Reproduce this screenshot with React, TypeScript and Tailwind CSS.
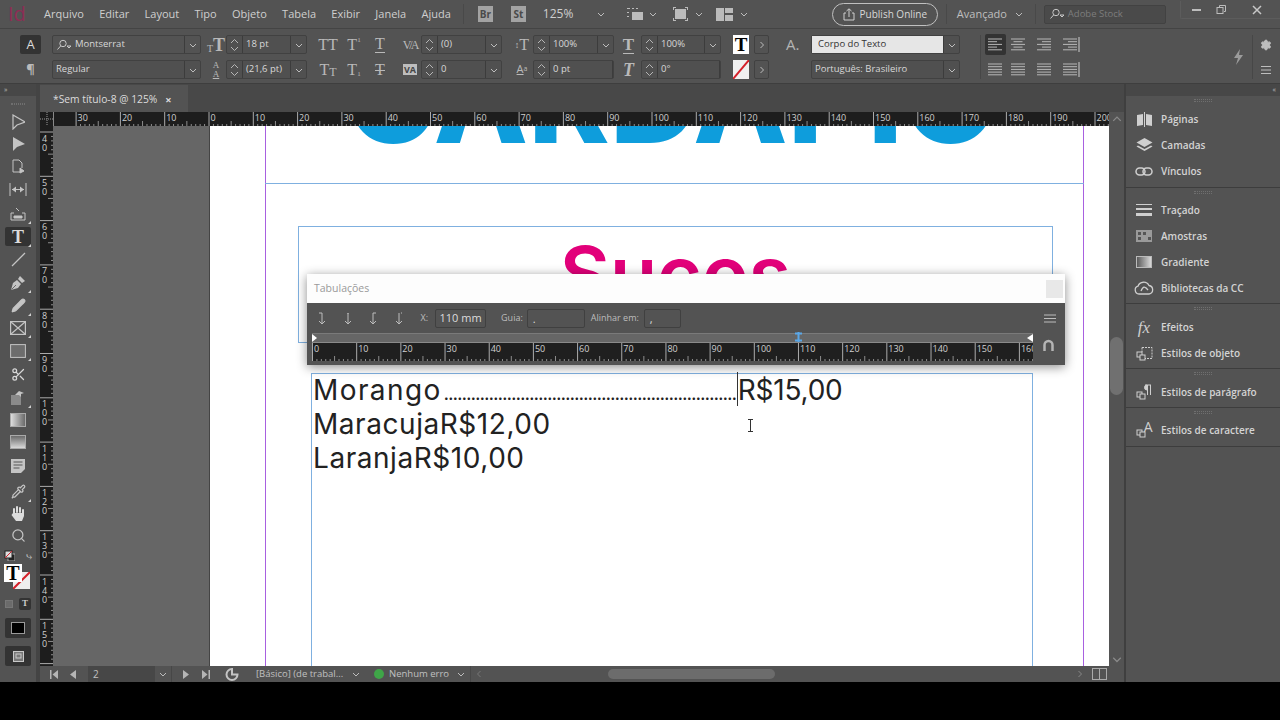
import React from "react";
import { Scissors, Search, Pipette, Pencil, Settings } from "lucide-react";

const C = "#c4c4c4";

function Chevron({ dir = "down", size = 8, color = "#bdbdbd" }: { dir?: "down" | "up" | "left" | "right"; size?: number; color?: string }) {
  const d = { down: "M1 3l3 3 3-3", up: "M1 5.5l3-3 3 3", left: "M5.5 1l-3 3 3 3", right: "M2.5 1l3 3-3 3" }[dir];
  return (
    <svg width={size} height={size} viewBox="0 0 8 8" fill="none" stroke={color} strokeWidth="1">
      <path d={d} />
    </svg>
  );
}

function Stepper() {
  return (
    <div className="w-[16px] h-full flex flex-col items-center justify-center border-r border-[#3c3c3c] shrink-0">
      <svg width="9" height="14" viewBox="0 0 9 14" fill="none" stroke="#b5b5b5" strokeWidth="1">
        <path d="M1 5l3.5-3.5L8 5M1 9l3.5 3.5L8 9" />
      </svg>
    </div>
  );
}

function Field({ w, value, stepper = true, caretW = 16, light = false }: { w: number; value: string; stepper?: boolean; caretW?: number; light?: boolean }) {
  return (
    <div style={{ width: w }} className="h-[19px] flex items-center border border-[#414141] rounded-[2px] bg-[#505050] text-[9.5px] text-[#d8d8d8] shrink-0">
      {stepper && <Stepper />}
      <div className={`flex-1 h-full flex items-center whitespace-nowrap overflow-hidden ${light ? "bg-[#e6e6e6] text-[#333] pl-[6px]" : "pl-[3px]"}`}>{value}</div>
      <div style={{ width: caretW }} className="h-full flex items-center justify-center border-l border-[#3c3c3c] shrink-0">
        <Chevron />
      </div>
    </div>
  );
}

function SerifT({ t, cls = "text-[16px]" }: { t: string; cls?: string }) {
  return <span className={`font-['Liberation_Serif',serif] text-[#b9b9b9] leading-none whitespace-nowrap ${cls}`}>{t}</span>;
}

function AlignIcon({ kind, last = false }: { kind: "l" | "c" | "r" | "j"; last?: boolean }) {
  const rows = [0, 1, 2, 3, 4];
  return (
    <svg width="18" height="15" viewBox="0 0 18 15" stroke="#b8b8b8" strokeWidth="1">
      {rows.map((r) => {
        const long = r % 2 === 0;
        const len = kind === "j" ? 14 : long ? 14 : 9;
        const x = kind === "l" || kind === "j" ? 1 : kind === "r" ? 15 - len : 8 - len / 2;
        return <line key={r} x1={x} x2={x + len} y1={2 + r * 2.7} y2={2 + r * 2.7} />;
      })}
      {last && <line x1="17" x2="17" y1="0" y2="15" stroke="#d0d0d0" />}
    </svg>
  );
}

function ControlBar() {
  return (
    <div className="h-[56px] bg-[#535353] border-t border-b border-t-[#444] border-b-[#3e3e3e] flex items-center pt-[2px] shrink-0">
      <div className="ml-[20px] w-[21px] flex flex-col gap-[6px] items-center">
        <div className="w-[21px] h-[19px] bg-[#333] rounded-[2px] flex items-center justify-center text-[#ddd] text-[13px]">A</div>
        <div className="h-[19px] flex items-center text-[#bbb] text-[13px] font-bold">¶</div>
      </div>
      <div className="ml-[11px] flex flex-col gap-[6px]">
        <div className="w-[149px] h-[19px] flex items-center border border-[#414141] rounded-[2px] text-[9.5px] text-[#d8d8d8]">
          <svg className="ml-[3px]" width="16" height="12" viewBox="0 0 16 12" fill="none" stroke="#c8c8c8"><circle cx="7" cy="4.5" r="3.2" /><path d="M4.6 7L1.5 10.5M11 7h4l-2 2z" /></svg>
          <span className="ml-[3px] flex-1">Montserrat</span>
          <div className="w-[16px] h-full flex items-center justify-center border-l border-[#3c3c3c]"><Chevron /></div>
        </div>
        <Field w={149} value="Regular" stepper={false} />
      </div>
      <div className="ml-[5px] w-[20px] flex flex-col gap-[6px] items-center">
        <div className="h-[19px] flex items-end"><SerifT t="T" cls="text-[10px]" /><SerifT t="T" cls="text-[18px] font-bold" /></div>
        <div className="h-[19px] flex flex-col items-center justify-center text-[9px] leading-[9px] text-[#b9b9b9] font-['Liberation_Serif',serif]"><span>A</span><span className="underline">A</span></div>
      </div>
      <div className="flex flex-col gap-[6px]">
        <Field w={81} value="18 pt" />
        <Field w={81} value="(21,6 pt)" />
      </div>
      <div className="ml-[8px] w-[78px] flex flex-col gap-[6px]">
        <div className="h-[19px] grid grid-cols-3 items-center justify-items-center">
          <SerifT t="TT" />
          <span className="flex items-start"><SerifT t="T" /><SerifT t="1" cls="text-[7px]" /></span>
          <span className="flex border-b border-[#b9b9b9]"><SerifT t="T" /></span>
        </div>
        <div className="h-[19px] grid grid-cols-3 items-center justify-items-center">
          <span className="flex items-end"><SerifT t="T" /><SerifT t="T" cls="text-[12px]" /></span>
          <span className="flex items-end"><SerifT t="T" /><SerifT t="1" cls="text-[7px]" /></span>
          <span className="flex line-through decoration-[#b9b9b9]"><SerifT t="T" cls="text-[16px] line-through" /></span>
        </div>
      </div>
      <div className="ml-[6px] w-[22px] flex flex-col gap-[6px] items-center">
        <div className="h-[19px] flex items-center"><span className="text-[12px] font-['Liberation_Serif',serif] text-[#bbb] tracking-[-2px]">V/A</span></div>
        <div className="h-[19px] flex items-center"><span className="text-[9px] font-bold bg-[#bdbdbd] text-[#444] px-[1px] leading-[11px]">VA</span></div>
      </div>
      <div className="flex flex-col gap-[6px]">
        <Field w={81} value="(0)" />
        <Field w={81} value="0" />
      </div>
      <div className="ml-[9px] w-[22px] flex flex-col gap-[6px] items-center">
        <div className="h-[19px] flex items-center"><span className="text-[9px] text-[#bbb]">↕</span><SerifT t="T" cls="text-[16px]" /></div>
        <div className="h-[19px] flex items-center"><span className="text-[11px] text-[#bbb] underline">A</span><span className="text-[7px] text-[#bbb]">a</span></div>
      </div>
      <div className="flex flex-col gap-[6px]">
        <Field w={81} value="100%" />
        <Field w={81} value="0 pt" caretW={0} />
      </div>
      <div className="ml-[2px] w-[25px] flex flex-col gap-[6px] items-center">
        <div className="h-[19px] flex items-center"><span className="flex border-b border-[#b9b9b9]"><SerifT t="T" cls="text-[17px] font-bold" /></span></div>
        <div className="h-[19px] flex items-center"><SerifT t="T" cls="text-[18px] italic font-bold" /></div>
      </div>
      <div className="flex flex-col gap-[6px]">
        <Field w={80} value="100%" />
        <Field w={80} value="0°" caretW={0} />
      </div>
      <div className="ml-[12px] flex flex-col gap-[6px]">
        <div className="h-[19px] flex items-center gap-[5px]">
          <div className="w-[16px] h-[19px] bg-white flex items-center justify-center"><span className="font-['Liberation_Serif',serif] font-bold text-[19px] text-black leading-none">T</span></div>
          <div className="w-[15px] h-[19px] border border-[#414141] rounded-[2px] flex items-center justify-center"><Chevron dir="right" /></div>
        </div>
        <div className="h-[19px] flex items-center gap-[5px]">
          <svg width="16" height="19" viewBox="0 0 16 19"><rect width="16" height="19" fill="#f0f0f0" /><path d="M0 19L16 0" stroke="#d4202a" strokeWidth="2" /></svg>
          <div className="w-[15px] h-[19px] border border-[#414141] rounded-[2px] flex items-center justify-center"><Chevron dir="right" /></div>
        </div>
      </div>
      <div className="ml-[17px] w-[18px] flex flex-col gap-[6px]">
        <div className="h-[19px] flex items-center text-[#b5b5b5] text-[15px] leading-none">A.</div>
        <div className="h-[19px]" />
      </div>
      <div className="ml-[7px] flex flex-col gap-[6px]">
        <Field w={149} value="Corpo do Texto" stepper={false} light />
        <Field w={149} value="Português: Brasileiro" stepper={false} />
      </div>
      <div className="ml-[20px] h-[44px] border-l border-[#474747] pl-[4px] flex flex-col gap-[6px]">
        <div className="h-[19px] flex items-center">
          <div className="w-[21px] h-[21px] bg-[#333] rounded-[2px] flex items-center justify-center"><AlignIcon kind="l" /></div>
          <div className="w-[26px] flex justify-center"><AlignIcon kind="c" /></div>
          <div className="w-[26px] flex justify-center"><AlignIcon kind="r" /></div>
          <div className="w-[26px] flex justify-center"><AlignIcon kind="r" last /></div>
        </div>
        <div className="h-[19px] flex items-center">
          <div className="w-[21px] flex justify-center"><AlignIcon kind="j" /></div>
          <div className="w-[26px] flex justify-center"><AlignIcon kind="j" /></div>
          <div className="w-[26px] flex justify-center"><AlignIcon kind="j" /></div>
          <div className="w-[26px] flex justify-center"><AlignIcon kind="j" last /></div>
        </div>
      </div>
      <svg className="ml-[148px]" width="12" height="18" viewBox="0 0 12 18" fill="#9b9b9b"><path d="M8 1L2 10h4l-2 7 7-10H7z" /></svg>
      <div className="ml-[8px] h-[44px] border-l border-[#474747] w-[26px] flex flex-col items-center justify-between py-[4px]">
        <Settings size={12} color="#bdbdbd" fill="#bdbdbd" />
        <svg width="12" height="10" stroke="#bdbdbd"><path d="M1 1.5h10M1 5h10M1 8.5h10" /></svg>
      </div>
    </div>
  );
}

function MenuBar() {
  const items = ["Arquivo", "Editar", "Layout", "Tipo", "Objeto", "Tabela", "Exibir", "Janela", "Ajuda"];
  return (
    <div className="h-[28px] bg-[#535353] flex items-center shrink-0 text-[#cfcfcf] text-[11px]">
      <span className="ml-[8px] w-[36px] text-[#8e2d55] text-[20px] leading-none">Id</span>
      <div className="flex gap-[15.3px]">{items.map((m) => <span key={m}>{m}</span>)}</div>
      <div className="ml-[12px] h-[20px] border-l border-[#494949]" />
      <div className="ml-[14px] w-[15px] h-[16px] bg-[#a3a3a3] text-[#4a4a4a] text-[10px] font-bold flex items-center justify-center">Br</div>
      <div className="ml-[18px] w-[15px] h-[16px] bg-[#a3a3a3] text-[#4a4a4a] text-[10px] font-bold flex items-center justify-center">St</div>
      <span className="ml-[17px] w-[54px] text-[12px]">125%</span>
      <Chevron />
      <svg className="ml-[22px]" width="18" height="14" viewBox="0 0 18 14" fill="#bbb"><path d="M0 1h3v1H0zM5 1h2v1H5zM9 1h2v1H9zM0 5h2v1H0zM0 9h2v1H0zM5 5h11v8H5z" /></svg>
      <span className="ml-[4px]"><Chevron /></span>
      <svg className="ml-[16px]" width="15" height="14" viewBox="0 0 15 14" fill="#bbb"><rect x="2" y="2" width="11" height="10" /><path d="M0 0h3v1H1v2H0zM15 0h-3v1h2v2h1zM0 14h3v-1H1v-2H0zM15 14h-3v-1h2v-2h1z" /></svg>
      <span className="ml-[7px]"><Chevron /></span>
      <svg className="ml-[13px]" width="17" height="13" viewBox="0 0 17 13" fill="#bbb"><rect width="8" height="13" /><rect x="9" width="8" height="5" /><rect x="9" y="7" width="8" height="6" /></svg>
      <span className="ml-[7px]"><Chevron /></span>
      <div className="ml-[84px] w-[106px] h-[23px] rounded-full border border-[#c0c0c0] flex items-center justify-center gap-[5px] text-[#d8d8d8] text-[10px] whitespace-nowrap">
        <svg width="12" height="13" viewBox="0 0 12 13" fill="none" stroke="#d0d0d0"><path d="M3 5H1v7h10V5H9M6 9V1M3.5 3L6 .8 8.500 3" /></svg>
        Publish Online
      </div>
      <div className="ml-[8px] h-[20px] border-l border-[#494949]" />
      <span className="ml-[10px] text-[#bfbfbf] text-[11px] w-[55px]">Avançado</span>
      <span className="ml-[3px]"><Chevron /></span>
      <div className="ml-[12px] h-[20px] border-l border-[#494949]" />
      <div className="ml-[8px] w-[122px] h-[19px] bg-[#4a4a4a] border border-[#424242] rounded-[2px] flex items-center pl-[4px] gap-[3px] text-[#7d7d7d] text-[9.5px]">
        <svg width="16" height="12" viewBox="0 0 16 12" fill="none" stroke="#c8c8c8"><circle cx="7" cy="4.500" r="3.200" /><path d="M4.600 7L1.500 10.500M11 7h4l-2 2z" /></svg>
        Adobe Stock
      </div>
      <div className="ml-[14px] w-[100px] h-[18px] -mt-[8px] border-l border-b border-[#5c5c5c] rounded-bl-[2px] flex items-center text-[#bdbdbd]">
        <svg className="ml-[11px]" width="10" height="4"><rect y="1" width="9" height="2" fill="#bdbdbd" /></svg>
        <svg className="ml-[14px]" width="11" height="11" fill="none" stroke="#bdbdbd"><rect x="1" y="3.500" width="6" height="6" /><path d="M3.500 3V1.500h6v6H8" /></svg>
        <svg className="ml-[25px]" width="10" height="10" stroke="#c8c8c8" strokeWidth="1.500"><path d="M1 1l8 8M9 1L1 9" /></svg>
      </div>
    </div>
  );
}

const PenNib = (
  <svg width="16" height="16" viewBox="0 0 16 16" fill={C}>
    <path d="M1 15l2-7 4-3 4 4-3 4z" />
    <path d="M8 4l2-3 5 5-3 2z" />
    <path d="M1.500 14.500L6 10" stroke="#535353" strokeWidth="0.800" />
  </svg>
);

const HandIcon = (
  <svg width="16" height="17" viewBox="0 0 16 17" stroke="#dcdcdc" strokeLinecap="round" strokeWidth="2" fill="#dcdcdc">
    <path d="M4 8V4M7 7V2M10 7V3M13 8V5" />
    <path d="M3 8h11v3l-2 5H6L1.500 10z" stroke="none" />
  </svg>
);

const TOOLS: [number, React.ReactNode, boolean?][] = [
  [22, <svg width="14" height="16" fill="none" stroke={C} strokeWidth="1.200"><path d="M2 1v14l4-4 8-3z" /></svg>],
  [22, <svg width="14" height="16" fill={C}><path d="M2 1v14l4-4 8-3z" /></svg>],
  [22, <svg width="14" height="15" fill="none" stroke={C}><path d="M2 1h6l3 3v5M2 1v12h7" /><path d="M9 9l4 3-4 2z" fill={C} /></svg>],
  [24, <svg width="18" height="13" stroke={C} fill={C}><path d="M1 0v13M17 0v13M3 6.500h12" /><path d="M3 6.500l4-3v6zM15 6.500l-4-3v6z" stroke="none" /></svg>],
  [24, <svg width="16" height="15" fill="none" stroke={C}><path d="M1 7v7h14V7h-3M1 7h3M6 2l3 3" /><path d="M4 10h8v2H4z" fill={C} /></svg>, true],
  [23, <div className="w-[26px] h-[19px] bg-[#333] rounded-[2px] flex items-center justify-center"><span className="font-['Liberation_Serif',serif] font-bold text-[18px] text-[#dcdcdc] leading-none">T</span></div>, true],
  [23, <svg width="15" height="15" stroke={C} strokeWidth="1.300"><path d="M1 14L14 1" /></svg>],
  [23, PenNib, true],
  [23, <Pencil size={15} color={C} fill={C} />, true],
  [22, <svg width="16" height="14" fill="none" stroke={C} strokeWidth="1.200"><rect x=".6" y=".6" width="14.800" height="12.800" /><path d="M1 1l14 12M15 1L1 13" /></svg>, true],
  [23, <svg width="16" height="14"><rect x=".6" y=".6" width="14.800" height="12.800" fill="#6d6d6d" stroke={C} /></svg>, true],
  [24, <Scissors size={15} color="#d8d8d8" />],
  [23, <svg width="16" height="14" fill={C}><path d="M1 4h10v10H1z" fill="#8a8a8a" /><path d="M9 0l5 2-3 1v3l-2-2-4 0z" /></svg>, true],
  [21, <svg width="16" height="14"><defs><linearGradient id="gg"><stop offset="0" stopColor="#e0e0e0" /><stop offset="1" stopColor="#666" /></linearGradient></defs><rect x=".5" y=".5" width="15" height="13" fill="url(#gg)" stroke="#aaa" /></svg>],
  [23, <svg width="16" height="14"><defs><linearGradient id="gf" x1="0" x2="0" y1="0" y2="1"><stop offset="0" stopColor="#666" /><stop offset="1" stopColor="#ddd" /></linearGradient></defs><rect x=".5" y=".5" width="15" height="13" fill="url(#gf)" stroke="#aaa" /></svg>],
  [26, <svg width="14" height="14" fill={C}><path d="M0 0h14v10l-4 4H0z" /><path d="M2.500 3h9M2.500 6h9M2.500 9h6" stroke="#555" /></svg>],
  [24, <Pipette size={15} color={C} />, true],
  [21, HandIcon],
  [23, <Search size={15} color={C} />],
];

function Tri() {
  return (
    <svg className="absolute left-[28px] bottom-[1px]" width="3" height="3" fill="#d0d0d0"><path d="M3 0v3H0z" /></svg>
  );
}

function Toolbar() {
  return (
    <div className="w-[40px] shrink-0 bg-[#535353] border-r-[4px] border-[#444] flex flex-col items-center h-full">
      <div className="h-[12px] w-full bg-[#474747] text-[#bdbdbd] text-[7px] leading-[12px] pl-[4px]">»</div>
      <div className="h-[15px] w-full flex justify-center items-center"><div className="w-[14px] h-[2px] border-y border-dotted border-[#6f6f6f]" /></div>
      {TOOLS.map(([h, icon, tri], i) => (
        <div key={i} style={{ height: h }} className="relative w-full flex items-center justify-center shrink-0">
          {icon}
          {tri && <Tri />}
        </div>
      ))}
      <div className="mt-[2px] w-[28px] h-[12px] flex items-center justify-between">
        <svg width="11" height="11"><rect x="4" y="4" width="7" height="7" fill="#222" stroke="#aaa" /><rect x="1" y="1" width="7" height="7" fill="#ddd" stroke="#222" /><path d="M1 8l7-7" stroke="#d4202a" /></svg>
        <span className="text-[#bbb] text-[10px] leading-none">⤷</span>
      </div>
      <div className="mt-[3px] w-[28px] h-[30px] relative">
        <div className="absolute left-[0px] top-[0px] w-[18px] h-[18px] bg-white z-10 flex items-center justify-center"><span className="font-['Liberation_Serif',serif] font-bold text-[20px] leading-none text-black">T</span></div>
        <svg className="absolute left-[9px] top-[8px]" width="17" height="17"><rect width="17" height="17" fill="#eee" /><path d="M0 17L17 0" stroke="#d4202a" strokeWidth="2" /></svg>
      </div>
      <div className="mt-[2px] flex items-center gap-[6px] h-[15px]">
        <div className="w-[8px] h-[8px] bg-[#6b6b6b] border border-[#777]" />
        <div className="w-[12px] h-[12px] bg-[#333] rounded-[2px] flex items-center justify-center text-[#ccc] text-[9px] font-bold font-['Liberation_Serif',serif]">T</div>
      </div>
      <div className="mt-[7px] w-[26px] h-[20px] bg-[#333] rounded-[2px] flex items-center justify-center"><div className="w-[14px] h-[12px] bg-black border border-[#999]" /></div>
      <div className="mt-[8px] w-[26px] h-[20px] bg-[#333] rounded-[2px] flex items-center justify-center">
        <svg width="11" height="11" fill="none" stroke="#c8c8c8"><rect x=".5" y=".5" width="10" height="10" fill="#777" /><rect x="3" y="3" width="5" height="4" /></svg>
      </div>
    </div>
  );
}

function HRuler({ width, origin, first, last, height = 14, bg = "#1d1d1d", spacing = 44.3 }: { width: number; origin: number; first: number; last: number; height?: number; bg?: string; spacing?: number }) {
  const marks: React.ReactNode[] = [];
  for (let k = first; k <= last; k++) {
    const x = origin + spacing * k;
    marks.push(<line key={"m" + k} x1={x} x2={x} y1={0} y2={height} stroke="#cfcfcf" strokeWidth="0.8" />);
    marks.push(
      <text key={"t" + k} x={x + 1.5} y={height === 14 ? 8.5 : 9} fontSize="9" fill="#cfcfcf" fontFamily="Open Sans, sans-serif">
        {Math.abs(k * 10)}
      </text>
    );
    for (let i = 1; i < 10; i++) {
      const xx = x + (spacing / 10) * i;
      marks.push(<line key={`s${k}-${i}`} x1={xx} x2={xx} y1={height - (i === 5 ? 5 : 2)} y2={height} stroke="#bdbdbd" strokeWidth="0.7" />);
    }
  }
  return (
    <svg width={width} height={height} className="block" style={{ background: bg }}>
      {marks}
    </svg>
  );
}

function VRuler() {
  const marks: React.ReactNode[] = [];
  for (let k = 0; k < 13; k++) {
    const y = 6 + 44.3 * k;
    marks.push(<line key={"m" + k} x1={0} x2={13} y1={y} y2={y} stroke="#cfcfcf" strokeWidth="0.8" />);
    String(40 + k * 10).split("").forEach((d, i) =>
      marks.push(
        <text key={`t${k}-${i}`} x={2} y={y + 9.5 + i * 9} fontSize="9" fill="#cfcfcf" fontFamily="Open Sans, sans-serif">
          {d}
        </text>
      )
    );
    for (let i = 1; i < 10; i++) {
      const yy = y + 4.43 * i;
      marks.push(<line key={`s${k}-${i}`} x1={13 - (i === 5 ? 5 : 2)} x2={13} y1={yy} y2={yy} stroke="#bdbdbd" strokeWidth="0.7" />);
    }
  }
  return (
    <svg width="13" height="540" className="block shrink-0" style={{ background: "#1d1d1d" }}>
      {marks}
    </svg>
  );
}

function TabsPanel() {
  const arrows = ["M5 1h-3", "M5 1v1", "M5 1h3", "M7 1h1"];
  return (
    <div className="absolute left-[254px] top-[148px] w-[758px] shadow-[0_2px_10px_rgba(0,0,0,0.45)] z-20">
      <div className="h-[29px] bg-[#fdfdfd] flex items-center justify-between pl-[7px] pr-[2px]">
        <span className="text-[#9a9a9a] text-[10.5px]">Tabulações</span>
        <div className="w-[17px] h-[18px] bg-[#e8e8e8]" />
      </div>
      <div className="h-[62px] bg-[#535353] flex flex-col">
        <div className="h-[30px] flex items-center text-[#bdbdbd] text-[9px]">
          <div className="ml-[10px] flex gap-[15.5px]">
            {arrows.map((d) => (
              <svg key={d} width="10" height="13" fill="none" stroke="#bdbdbd" strokeWidth="1"><path d="M5 1v11M2 9l3 3 3-3" /><path d={d} /></svg>
            ))}
          </div>
          <span className="ml-[17px]">X:</span>
          <div className="ml-[7px] w-[51px] h-[19px] border border-[#404040] rounded-[2px] text-[#dcdcdc] text-[11px] flex items-center justify-center whitespace-nowrap">110 mm</div>
          <span className="ml-[15px]">Guia:</span>
          <div className="ml-[4px] w-[58px] h-[19px] border border-[#404040] rounded-[2px] text-[#dcdcdc] text-[11px] pl-[5px] leading-[17px]">.</div>
          <span className="ml-[6px] whitespace-nowrap">Alinhar em:</span>
          <div className="ml-[5px] w-[37px] h-[19px] border border-[#404040] rounded-[2px] text-[#dcdcdc] text-[11px] pl-[5px] leading-[17px]">,</div>
          <svg className="ml-[363px]" width="12" height="9" stroke="#bdbdbd"><path d="M0 1h12M0 4.500h12M0 8h12" /></svg>
        </div>
        <div className="ml-[5px] flex items-start">
          <div className="w-[721px] flex flex-col">
            <div className="relative h-[9px] bg-[#666] border-t border-[#7a7a7a]">
              <svg className="absolute left-0 top-0" width="5" height="9" fill="#fff"><path d="M0 0l5 4-5 4z" /></svg>
              <svg className="absolute left-[483px] -top-[2px]" width="7" height="10" stroke="#5aa7e8" strokeWidth="2" fill="none"><path d="M3.500 0v10M0 1.500h7M0 8.500h7" /></svg>
              <svg className="absolute right-0 top-0" width="6" height="9" fill="#fff"><path d="M6 0L0 4l6 4z" /></svg>
            </div>
            <div className="border-t border-[#8a8a8a]">
              <HRuler width={721} origin={0.5} first={0} last={16} height={18} bg="#1f1f1f" spacing={44.18} />
            </div>
          </div>
          <svg className="ml-[10px] mt-[6px]" width="11" height="13" fill="none" stroke="#b5b5b5" strokeWidth="2.500"><path d="M1.500 12V6a4 4 0 0 1 8 0v6" /></svg>
        </div>
      </div>
    </div>
  );
}

function Canvas() {
  const mont = "font-['Inter',sans-serif]";
  return (
    <div className="relative flex-1 h-[540px] bg-[#666] overflow-hidden">
      {/* page */}
      <div className="absolute left-[157px] top-0 w-[900px] h-[540px] bg-white shadow-[0_0_0_1px_#444] overflow-hidden">
        <div className="absolute left-[55px] top-0 bottom-0 w-px bg-[#a860e0]" />
        <div className="absolute left-[873px] top-0 bottom-0 w-px bg-[#a860e0]" />
        <div className="absolute left-[55px] top-[57px] w-[819px] h-px bg-[#7fb0e0]" />
        <div className={`absolute left-[142px] top-[-97px] w-[640px] flex justify-center text-[#0e9ddc] text-[123px] leading-[140px] font-extrabold whitespace-nowrap ${mont}`}>CARDÁPIO</div>
        <div className="absolute left-[88px] top-[100px] w-[755px] h-[117px] border border-[#7fb0e0] flex justify-center overflow-hidden">
          <div className={`mt-[3px] text-[#e2007a] text-[77px] leading-[88px] font-semibold ${mont}`}>Sucos</div>
        </div>
        <div className={`absolute left-[101px] top-[247px] w-[722px] h-[400px] border border-[#7fb0e0] text-[#222] text-[28px] leading-[34px] ${mont} tracking-[0.55px]`}>
          <div className="flex items-baseline h-[34px] mt-[-1px] pl-[1px]">
            <span className="tracking-[1.4px]">Morango</span>
            <span className="ml-[2px] w-[293px] overflow-hidden whitespace-nowrap text-[16px] font-semibold tracking-[-0.6px] text-[#222]">{".".repeat(80)}</span>
            <span className="w-px h-[34px] bg-[#333] self-start -mt-[1px]" />
            <span className="tracking-[-0.2px]">R$15,00</span>
          </div>
          <div className="pl-[1px]">MaracujaR$12,00</div>
          <div className="pl-[1px]">LaranjaR$10,00</div>
        </div>
        <svg className="absolute left-[537px] top-[293px]" width="7" height="13" stroke="#333" fill="none"><path d="M1 .5h5M1 12.500h5M3.500 .5v12" /></svg>
      </div>
      <TabsPanel />
    </div>
  );
}

function Dock() {
  const groups: { pt: number; pb: number; items: [string, React.ReactNode][] }[] = [
    {
      pt: 10, pb: 3,
      items: [
        ["Páginas", <svg width="17" height="15" fill="#cfcfcf"><path d="M1 3l6-1v11l-6 1zM16 3l-6-1v11l6 1zM8 0h1v15H8z" /></svg>],
        ["Camadas", <svg width="17" height="15" fill="#cfcfcf"><path d="M8.500 0l8 4.500-8 4.500-8-4.500zM2 7.500l6.500 3.500 6.500-3.500 1.500 1-8 4.500-8-4.500z" /></svg>],
        ["Vínculos", <svg width="18" height="11" fill="none" stroke="#cfcfcf" strokeWidth="1.500"><rect x="1" y="2" width="9" height="7" rx="3.500" /><rect x="8" y="2" width="9" height="7" rx="3.500" /></svg>],
      ],
    },
    {
      pt: 9, pb: 2,
      items: [
        ["Traçado", <svg width="17" height="13" fill="#cfcfcf"><rect width="16" height="1" /><rect y="4" width="16" height="2" /><rect y="9" width="16" height="3" /></svg>],
        ["Amostras", <svg width="16" height="12"><rect width="16" height="12" fill="#9a9a9a" /><path d="M2 2h3v3H2zM7 2h3v3H7zM2 7h3v3H2zM12 7h3v3h-3z" fill="#555" /></svg>],
        ["Gradiente", <svg width="16" height="12"><defs><linearGradient id="dg"><stop offset="0" stopColor="#555" /><stop offset="1" stopColor="#ddd" /></linearGradient></defs><rect x=".5" y=".5" width="15" height="11" fill="url(#dg)" stroke="#bbb" /></svg>],
        ["Bibliotecas da CC", <svg width="20" height="14" fill="none" stroke="#cfcfcf" strokeWidth="1.300"><path d="M5 13a4 4 0 0 1-1-7.800A6 6 0 0 1 15 4.500 4.300 4.300 0 0 1 15 13z" /><path d="M7 10c2-5 4-5 7-1" /></svg>],
      ],
    },
    {
      pt: 10, pb: 2,
      items: [
        ["Efeitos", <span className="font-['Liberation_Serif',serif] italic text-[17px] text-[#cfcfcf] leading-none">fx</span>],
        ["Estilos de objeto", <svg width="17" height="15" fill="none" stroke="#cfcfcf"><path d="M6 1.500h10v11H9M6 1.500V6" strokeDasharray="2 1" /><rect x="1" y="6" width="5" height="5" /><rect x="4" y="9" width="5" height="5" fill="#535353" /></svg>],
      ],
    },
    {
      pt: 10, pb: 2,
      items: [
        ["Estilos de parágrafo", <svg width="17" height="16" fill="none" stroke="#cfcfcf"><path d="M9 1h6M11.500 1v10M14.500 1v10" /><path d="M11 1a2.500 2.500 0 0 0 0 5" fill="#cfcfcf" /><rect x="1" y="8" width="5" height="5" /><rect x="4" y="10" width="5" height="5" fill="#535353" /></svg>],
      ],
    },
    {
      pt: 9, pb: 3,
      items: [
        ["Estilos de caractere", <div className="relative w-[17px] h-[16px]"><svg className="absolute left-0 top-0" width="10" height="16" fill="none" stroke="#cfcfcf"><rect x="1" y="8" width="5" height="5" /><rect x="4" y="10" width="5" height="5" fill="#535353" /></svg><span className="absolute right-0 -top-[2px] text-[#cfcfcf] text-[14px] leading-none">A</span></div>],
      ],
    },
  ];
  return (
    <div className="w-[156px] shrink-0 bg-[#535353] border-l-[2px] border-[#3f3f3f] flex flex-col h-full">
      <div className="h-[12px] bg-[#474747] text-[#bdbdbd] text-[7px] leading-[12px] text-right pr-[4px]">«</div>
      {groups.map((g, i) => (
        <div key={i} style={{ paddingTop: g.pt, paddingBottom: g.pb }} className="relative border-b border-[#3d3d3d]">
          <div className="absolute left-[68px] top-[3px] w-[18px] h-[3px] border-y border-dotted border-[#6f6f6f]" />
          {g.items.map(([label, icon]) => (
            <div key={label} className="h-[26px] flex items-center">
              <div className="w-[35px] flex justify-center pl-[1px] shrink-0">{icon}</div>
              <span className="pt-[1px] text-[#d4d4d4] text-[10px] font-semibold whitespace-nowrap">{label}</span>
            </div>
          ))}
        </div>
      ))}
    </div>
  );
}

function StatusBar() {
  return (
    <div className="h-[16px] bg-[#535353] flex items-center text-[#c0c0c0] text-[9.5px] whitespace-nowrap">
      <svg className="ml-[10px]" width="8" height="9" fill="#b5b5b5"><path d="M0 0h1.500v9H0zM8 0v9L2.500 4.500z" /></svg>
      <svg className="ml-[12px]" width="6" height="9" fill="#b5b5b5"><path d="M6 0v9L0 4.500z" /></svg>
      <div className="ml-[12px] w-[67px] h-[16px] bg-[#474747] pl-[5px] text-[10px] leading-[16px]">2</div>
      <div className="w-[17px] flex justify-center border-r border-[#474747] h-[16px] items-center"><Chevron /></div>
      <svg className="ml-[11px]" width="6" height="9" fill="#b5b5b5"><path d="M0 0v9l6-4.500z" /></svg>
      <svg className="ml-[13px]" width="8" height="9" fill="#b5b5b5"><path d="M8 0H6.500v9H8zM0 0v9l5.500-4.500z" /></svg>
      <svg className="ml-[15px]" width="14" height="13" fill="none" stroke="#c4c4c4" strokeWidth="2"><path d="M7 1a5.500 5.500 0 1 0 5.500 5.500H7z" /></svg>
      <span className="ml-[17px] w-[90px]">[Básico] (de trabal...</span>
      <span className="ml-[6px]"><Chevron /></span>
      <div className="ml-[14px] w-[10px] h-[10px] rounded-full bg-[#3fa648]" />
      <span className="ml-[5px] w-[67px]">Nenhum erro</span>
      <span className="ml-[1px]"><Chevron /></span>
      <div className="ml-[5px] h-[16px] flex-1 flex items-center border-l border-[#484848] pl-[4px]">
        <Chevron dir="left" color="#777" />
        <div className="flex-1 h-[16px] flex items-center pl-[125px]">
          <div className="w-[167px] h-[10px] bg-[#6c6c6c] rounded-full" />
        </div>
        <Chevron dir="right" color="#888" />
        <div className="ml-[8px] w-[15px] h-[12px] border border-[#aaa] flex"><div className="w-1/2 border-r border-[#aaa]" /></div>
        <div className="w-[17px]" />
      </div>
    </div>
  );
}

export default function App() {
  return (
    <div className="w-[1280px] h-[720px] bg-black overflow-hidden flex flex-col font-['Open_Sans',sans-serif]">
      <MenuBar />
      <ControlBar />
      <div className="h-[598px] flex shrink-0">
        <Toolbar />
        <div className="flex-1 min-w-0 flex flex-col">
          <div className="h-[28px] bg-[#484848] flex items-end">
            <div className="w-[148px] h-[27px] bg-[#535353] flex items-center pl-[13px] pt-[2px] text-[#dcdcdc] text-[10.3px] whitespace-nowrap">
              *Sem título-8 @ 125%
              <span className="ml-[8px] font-bold text-[11px] leading-none">×</span>
            </div>
          </div>
          <div className="h-[14px] flex">
            <div className="w-[1069px] relative">
              <HRuler width={1069} origin={169} first={-3} last={20} />
              <div className="absolute left-0 top-0 w-[14px] h-[14px] bg-[#1d1d1d] border-r border-[#888]">
                <svg width="13" height="14" stroke="#999" strokeDasharray="1 1"><path d="M0 7h13M7 0v14" /></svg>
              </div>
            </div>
            <div className="flex-1 bg-[#535353] flex justify-center items-center"><Chevron dir="up" color="#8a8a8a" size={10} /></div>
          </div>
          <div className="h-[540px] flex">
            <VRuler />
            <div className="flex-1 min-w-0 flex"><Canvas /></div>
            <div className="w-[15px] shrink-0 bg-[#535353] flex flex-col items-center pt-[211px] pb-[2px] justify-between">
              <div className="w-[13px] h-[58px] bg-[#707070] rounded-full" />
              <Chevron color="#8a8a8a" size={10} />
            </div>
          </div>
          <StatusBar />
        </div>
        <Dock />
      </div>
    </div>
  );
}
